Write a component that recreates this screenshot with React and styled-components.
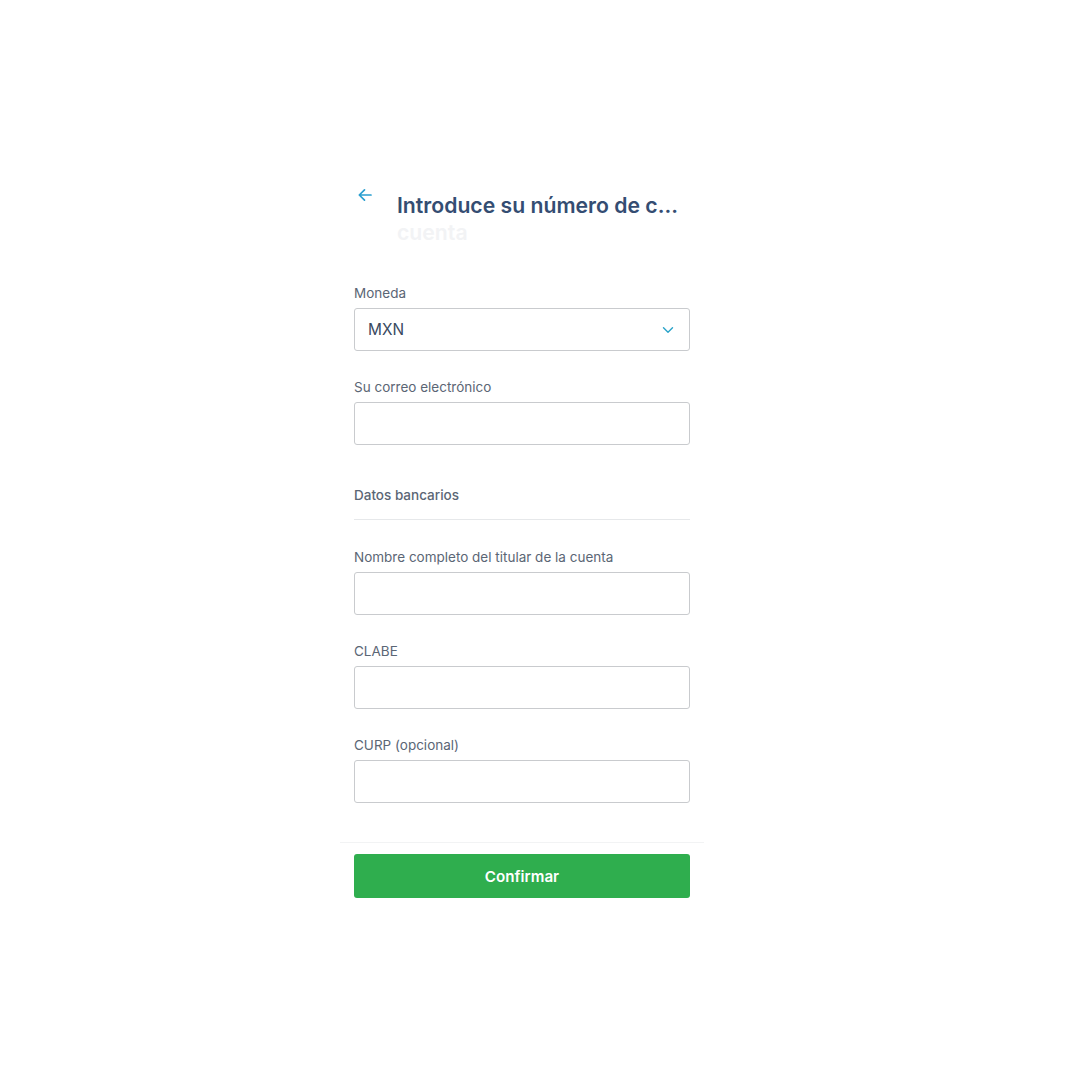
import React from 'react';
import styled, { createGlobalStyle } from 'styled-components';

const GlobalStyle = createGlobalStyle`
  body {
    margin: 0;
    background: #ffffff;
    font-family: Inter, 'Noto Sans', sans-serif;
  }
`;

const fields = [
  { label: 'Nombre completo del titular de la cuenta' },
  { label: 'CLABE' },
  { label: 'CURP (opcional)' },
];

function BackArrow() {
  return (
    <svg width="16" height="16" viewBox="0 0 16 16" fill="none">
      <path
        d="M14 8H2.5M7.5 2.8L2.3 8l5.2 5.2"
        stroke="#2a9fd0"
        strokeWidth="1.7"
        strokeLinecap="round"
        strokeLinejoin="round"
      />
    </svg>
  );
}

function Chevron() {
  return (
    <svg width="12" height="8" viewBox="0 0 12 8" fill="none">
      <path
        d="M1.5 1.8L6 6.2l4.5-4.4"
        stroke="#2aa3c9"
        strokeWidth="1.4"
        strokeLinecap="round"
        strokeLinejoin="round"
      />
    </svg>
  );
}

function App() {
  return (
    <>
      <GlobalStyle />
      <Page>
        <Panel>
          <Header>
            <BackButton>
              <BackArrow />
            </BackButton>
            <TitleBlock>
              <Title>Introduce su número de c...</Title>
              <TitleGhost>cuenta</TitleGhost>
            </TitleBlock>
          </Header>

          <Form>
            <Field>
              <Label>Moneda</Label>
              <Select>
                <SelectValue>MXN</SelectValue>
                <Chevron />
              </Select>
            </Field>
            <Field>
              <Label>Su correo electrónico</Label>
              <Input />
            </Field>

            <Section>
              <SectionTitle>Datos bancarios</SectionTitle>
            </Section>

            {fields.map((f) => (
              <Field key={f.label}>
                <Label>{f.label}</Label>
                <Input />
              </Field>
            ))}
          </Form>

          <Footer>
            <ConfirmButton>Confirmar</ConfirmButton>
          </Footer>
        </Panel>
      </Page>
    </>
  );
}

export default App;

const Page = styled.div`
  width: 1080px;
  height: 1080px;
  display: flex;
  justify-content: center;
  padding: 184px 36px 0 0;
  box-sizing: border-box;
`;

const Panel = styled.div`
  width: 364px;
  display: flex;
  flex-direction: column;
`;

const Header = styled.div`
  display: flex;
  align-items: flex-start;
  padding: 0 14px 0 17px;
  height: 65px;
`;

const BackButton = styled.div`
  width: 16px;
  height: 16px;
  margin-top: 3px;
  margin-right: 24px;
  display: flex;
`;

const TitleBlock = styled.div`
  display: flex;
  flex-direction: column;
  padding-top: 8px;
`;

const Title = styled.h1`
  margin: 0;
  font-size: 21.2px;
  line-height: 27px;
  font-weight: 600;
  color: #344d72;
  white-space: nowrap;
`;

const TitleGhost = styled.div`
  font-size: 21.2px;
  line-height: 27px;
  font-weight: 600;
  color: #f2f3f5;
`;

const Form = styled.div`
  display: flex;
  flex-direction: column;
  gap: 26px;
  padding: 34px 14px 0;
`;

const Field = styled.div`
  display: flex;
  flex-direction: column;
`;

const Label = styled.label`
  font-size: 13.5px;
  line-height: 20px;
  color: #5b6675;
  margin-bottom: 5px;
`;

const Input = styled.div`
  height: 43px;
  box-sizing: border-box;
  border: 1px solid #c9cbce;
  border-radius: 3px;
  background: #fff;
`;

const Select = styled(Input)`
  display: flex;
  align-items: center;
  justify-content: space-between;
  padding: 0 15px 0 13px;
`;

const SelectValue = styled.span`
  font-size: 15.4px;
  color: #3a4a5f;
`;

const Section = styled.div`
  padding-top: 14px;
  padding-bottom: 14px;
  border-bottom: 1px solid #e6e8ea;
  margin-bottom: 1px;
`;

const SectionTitle = styled.div`
  font-size: 13.5px;
  line-height: 20px;
  font-weight: 500;
  color: #5b6675;
`;

const Footer = styled.div`
  margin-top: 39px;
  border-top: 1px solid #f2f3f4;
  padding: 11px 14px 0;
`;

const ConfirmButton = styled.button`
  width: 100%;
  height: 44px;
  border: none;
  border-radius: 3px;
  background: #2fae4e;
  color: #ffffff;
  font-family: Inter, 'Noto Sans', sans-serif;
  font-size: 15.2px;
  font-weight: 600;
  cursor: pointer;
`;
